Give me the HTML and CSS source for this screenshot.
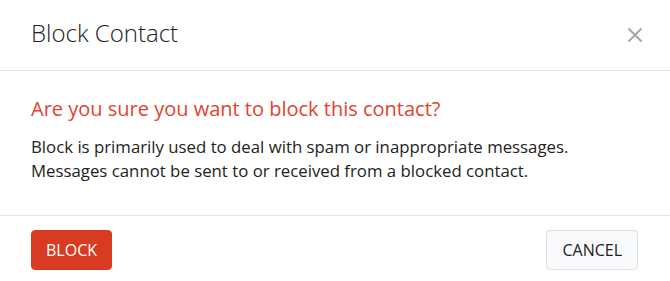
FILE: index.html
```html
<!DOCTYPE html>
<html lang="en">
<head>
<meta charset="utf-8">
<title>Block Contact</title>
<link rel="stylesheet" href="styles.css">
</head>
<body>
<div class="modal">
  <div class="modal-header">
    <h1 class="modal-title">Block Contact</h1>
    <button class="close" aria-label="Close">
      <svg width="16" height="16" viewBox="0 0 16 16"><path d="M1.5 1.5L14.5 14.5M14.5 1.5L1.5 14.5" stroke="#a3a3a3" stroke-width="1.8" fill="none"/></svg>
    </button>
  </div>
  <div class="modal-body">
    <h2 class="warning">Are you sure you want to block this contact?</h2>
    <p class="desc">Block is primarily used to deal with spam or inappropriate messages.<br>Messages cannot be sent to or received from a blocked contact.</p>
  </div>
  <div class="modal-footer">
    <button class="btn btn-danger">BLOCK</button>
    <button class="btn btn-default">CANCEL</button>
  </div>
</div>
</body>
</html>
```
FILE: styles.css
```css
html, body {
  margin: 0;
  padding: 0;
  background: #fff;
}
body {
  font-family: "Open Sans", "Liberation Sans", sans-serif;
  color: #222;
}
.modal {
  width: 670px;
}
.modal-header {
  display: flex;
  align-items: center;
  justify-content: space-between;
  padding: 17px 27px 21px 31px;
  border-bottom: 1px solid #e6e6e6;
}
.modal-title {
  margin: 0;
  font-size: 24px;
  font-weight: 300;
  line-height: 32px;
  color: #222;
}
.close {
  border: 0;
  background: none;
  padding: 0;
  width: 16px;
  height: 16px;
  display: flex;
  margin-top: 3px;
}
.modal-body {
  padding: 24px 32px 32px 31px;
}
.warning {
  margin: 0 0 12px;
  font-size: 20px;
  font-weight: 400;
  line-height: 28px;
  color: #e04430;
}
.desc {
  margin: 0;
  font-size: 16.8px;
  line-height: 24px;
  color: #222;
}
.modal-footer {
  display: flex;
  justify-content: space-between;
  align-items: flex-start;
  padding: 14px 32px 14px 31px;
  border-top: 1px solid #e6e6e6;
}
.btn {
  font-family: "Open Sans", "Liberation Sans", sans-serif;
  font-size: 16px;
  height: 40px;
  border-radius: 4px;
  line-height: 38px;
}
.btn-danger {
  padding: 0 14px;
  background: #d93a22;
  color: #fff;
  border: 1px solid #d93a22;
}
.btn-default {
  padding: 0 15px;
  background: #f8f9fa;
  color: #222;
  border: 1px solid #dcdfe3;
}
```
